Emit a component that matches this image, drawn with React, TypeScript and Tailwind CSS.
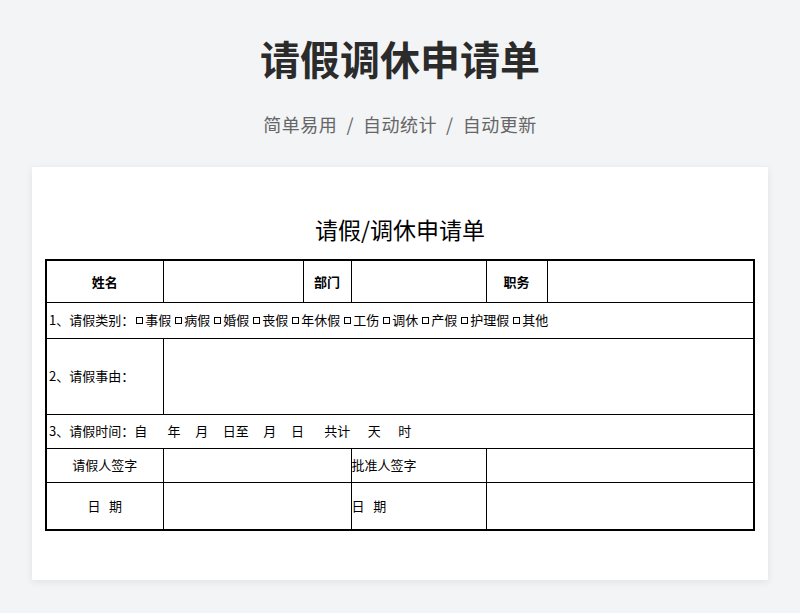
const Box = () => <span className="inline-block w-[7px] h-[7px] border border-black mx-[2px] align-[1px]"></span>;

export default function App() {
  const f = { fontFamily: '"Noto Sans CJK SC", "Noto Sans", sans-serif' };
  const c = "border border-black p-0";
  const items = ["事假", "病假", "婚假", "丧假", "年休假", "工伤", "调休", "产假", "护理假", "其他"];
  return (
    <div className="w-[800px] h-[613px] bg-[#f3f4f6] flex flex-col items-center overflow-hidden" style={f}>
      <div className="mt-[30px] h-[56px] text-[40px] leading-[56px] font-bold text-[#2b2b2b]">请假调休申请单</div>
      <div className="mt-[25px] h-[26px] text-[18px] leading-[26px] text-[#666] tracking-[0.5px]">简单易用&nbsp;&nbsp;/&nbsp;&nbsp;自动统计&nbsp;&nbsp;/&nbsp;&nbsp;自动更新</div>
      <div className="mt-[30px] w-[736px] h-[413px] bg-white shadow-[0_2px_8px_rgba(0,0,0,0.08)] flex flex-col items-center">
        <div className="mt-[45px] h-[34px] text-[23px] leading-[34px] text-black">请假/调休申请单</div>
        <table className="mt-[13px] w-[708px] border-collapse border-2 border-black text-[13px] text-black table-fixed">
          <colgroup>
            <col className="w-[117px]" /><col className="w-[140px]" /><col className="w-[48px]" />
            <col className="w-[135px]" /><col className="w-[61px]" /><col className="w-[207px]" />
          </colgroup>
          <tbody>
            <tr className="h-[42px]">
              <td className={c + " text-center font-bold"}>姓名</td>
              <td className={c}></td>
              <td className={c + " text-center font-bold"}>部门</td>
              <td className={c}></td>
              <td className={c + " text-center font-bold"}>职务</td>
              <td className={c}></td>
            </tr>
            <tr className="h-[36px]">
              <td colSpan={6} className={c + " pl-[2px]"}>
                1、请假类别：
                {items.map((t) => (
                  <span key={t} className="mr-[2px]"><Box />{t}</span>
                ))}
              </td>
            </tr>
            <tr className="h-[76px]">
              <td className={c + " pl-[2px]"}>2、请假事由：</td>
              <td colSpan={5} className={c}></td>
            </tr>
            <tr className="h-[34px]">
              <td colSpan={6} className={c + " pl-[2px] whitespace-pre"}>3、请假时间：自{"       "}年{"     "}月{"     "}日至{"     "}月{"     "}日{"       "}共计{"      "}天{"      "}时</td>
            </tr>
            <tr className="h-[34px]">
              <td className={c + " text-center"}>请假人签字</td>
              <td colSpan={2} className={c}></td>
              <td className={c}>批准人签字</td>
              <td colSpan={2} className={c}></td>
            </tr>
            <tr className="h-[48px]">
              <td className={c + " text-center whitespace-pre"}>日   期</td>
              <td colSpan={2} className={c}></td>
              <td className={c + " whitespace-pre"}>日   期</td>
              <td colSpan={2} className={c}></td>
            </tr>
          </tbody>
        </table>
      </div>
    </div>
  );
}
